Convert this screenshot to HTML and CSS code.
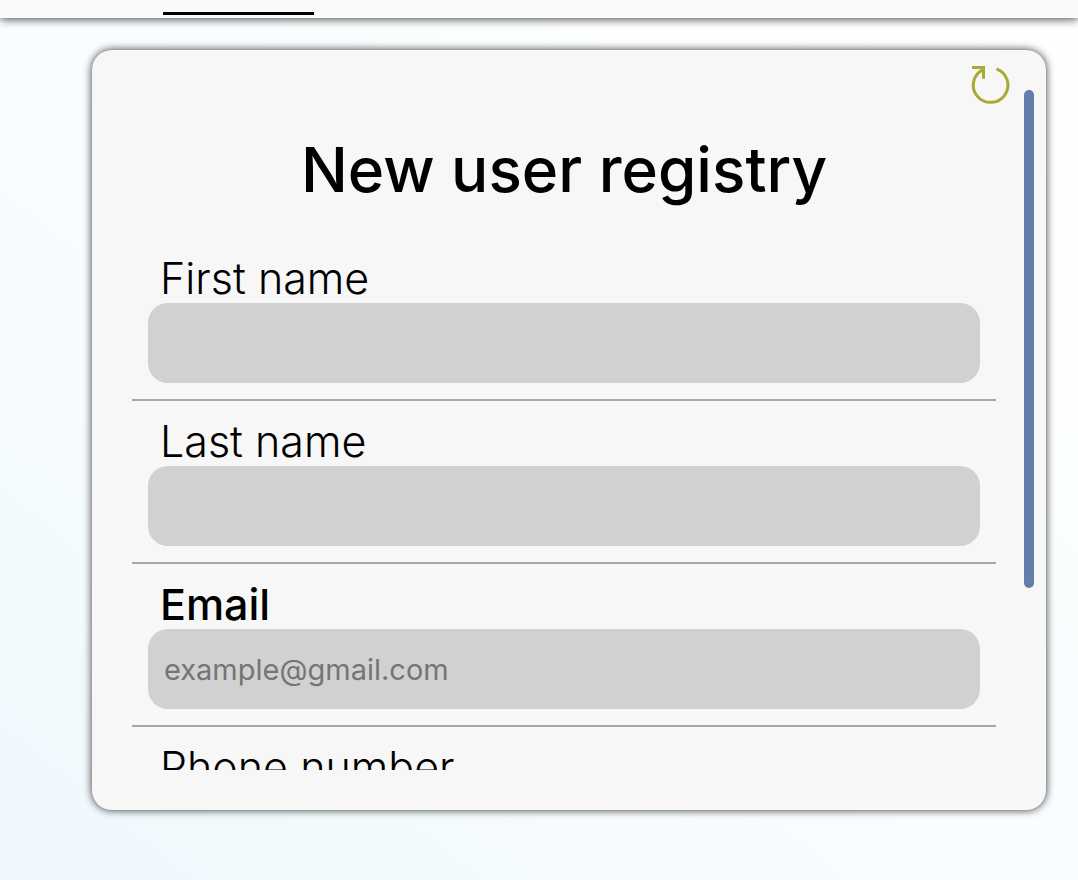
FILE: index.html
```html
<!DOCTYPE html>
<html lang="en">
<head>
<meta charset="utf-8">
<meta name="viewport" content="width=device-width, initial-scale=1">
<title>New user registry</title>
<link rel="stylesheet" href="styles.css">
</head>
<body>
<header class="topbar"><span class="tab-marker"></span></header>
<main class="page">
  <section class="card">
    <button class="reset" type="reset" form="registry" aria-label="Reset form">
      <svg class="reset-icon" viewBox="0 0 40 40" aria-hidden="true">
        <path d="M25.500 3.800A17.300 17.300 0 1 1 12.500 4.300"/>
        <path d="M1 2.500H12.500V13.800"/>
      </svg>
    </button>
    <div class="scroller">
      <form class="form" id="registry">
        <h1 class="title">New user registry</h1>
        <div class="field">
          <label class="label" for="first">First name</label>
          <input class="input" id="first" type="text">
        </div>
        <div class="field">
          <label class="label" for="last">Last name</label>
          <input class="input" id="last" type="text">
        </div>
        <div class="field">
          <label class="label required" for="email">Email</label>
          <input class="input" id="email" type="email" placeholder="example@gmail.com">
        </div>
        <div class="field">
          <label class="label" for="phone">Phone number</label>
          <input class="input" id="phone" type="tel">
        </div>
      </form>
    </div>
    <div class="track" aria-hidden="true"><div class="thumb"></div></div>
  </section>
</main>
</body>
</html>
```

FILE: styles.css
```css
* {
  box-sizing: border-box;
}

body {
  margin: 0;
  height: 100vh;
  overflow: hidden;
  display: flex;
  flex-direction: column;
  font-family: Inter, "Liberation Sans", sans-serif;
  color: #000;
  background: linear-gradient(to top right, #f0f8fd, #f8fdff 45%, #fff);
}

.topbar {
  flex: none;
  padding: 12px 0 3px 163px;
  background: #fafafa;
  box-shadow: 0 1px 10px rgba(0, 0, 0, 0.75);
}

.tab-marker {
  display: block;
  width: 151px;
  height: 3px;
  background: #000;
}

.page {
  flex: 1;
  min-height: 0;
  display: flex;
  padding: 32px 32px 70px 92px;
}

.card {
  position: relative;
  flex: 1;
  min-width: 0;
  display: flex;
  gap: 28px;
  padding: 40px 12px 40px 40px;
  border-radius: 20px;
  background: #f7f7f7;
  box-shadow: 0 0 9px rgba(0, 0, 0, 0.8);
}

.reset {
  position: absolute;
  top: 15px;
  right: 35px;
  padding: 0;
  border: 0;
  background: none;
  cursor: pointer;
}

.reset-icon {
  display: block;
  width: 40px;
  height: 40px;
  fill: none;
  stroke: #a9aa34;
  stroke-width: 3;
}

.scroller {
  flex: 1;
  min-width: 0;
  overflow-y: auto;
  scrollbar-width: none;
}

.track {
  flex: none;
  width: 10px;
}

.thumb {
  height: 73.2%;
  border-radius: 5px;
  background: #657da9;
}

.form {
  padding: 40px 0 129px;
}

.title {
  margin: 0 0 44px;
  font-size: 62px;
  font-weight: 500;
  line-height: 80px;
  text-align: center;
}

.field {
  padding: 0 16px 16px;
  margin-bottom: 16px;
  border-bottom: 2px solid #a7a7a7;
}

.label {
  display: block;
  padding-left: 12px;
  font-size: 43px;
  font-weight: 300;
  line-height: 49px;
}

.required {
  font-weight: 500;
}

.input {
  display: block;
  width: 100%;
  height: 80px;
  padding: 0 16px;
  border: 0;
  border-radius: 20px;
  background: #d1d1d1;
  font-family: inherit;
  font-size: 29px;
}

.input::placeholder {
  color: #757575;
}
```
